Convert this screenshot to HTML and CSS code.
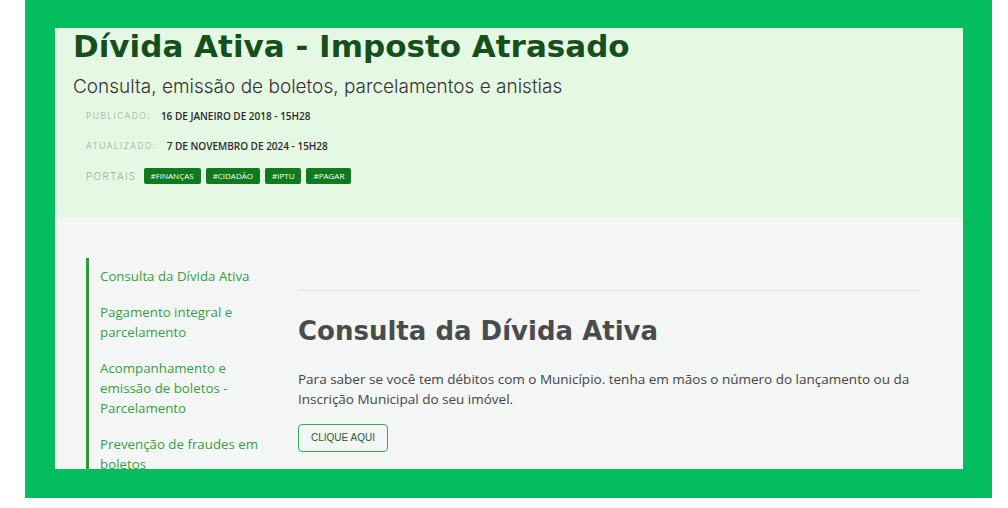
FILE: index.html
```html
<!DOCTYPE html>
<html lang="pt-BR">
<head>
    <meta charset="UTF-8">
    <meta name="viewport" content="width=device-width, initial-scale=1.0">
    <title>Dívida Ativa - Imposto Atrasado</title>
    <link rel="stylesheet" href="styles.css">
</head>
<body>
    <div class="frame">
        <div class="page">
            <header class="pageHeader">
                <h1 class="pageTitle">Dívida Ativa - Imposto Atrasado</h1>
                <p class="pageSubtitle">Consulta, emissão de boletos, parcelamentos e anistias</p>
                <div class="metaRow">
                    <span class="metaLabel">Publicado:</span>
                    <span class="metaValue">16 de janeiro de 2018 - 15h28</span>
                </div>
                <div class="metaRow">
                    <span class="metaLabel">Atualizado:</span>
                    <span class="metaValue">7 de novembro de 2024 - 15h28</span>
                </div>
                <div class="metaRow">
                    <span class="metaLabel">Portais</span>
                    <a class="tag" href="#">#finanças</a>
                    <a class="tag" href="#">#cidadão</a>
                    <a class="tag" href="#">#iptu</a>
                    <a class="tag" href="#">#pagar</a>
                </div>
            </header>

            <div class="pageBody">
                <nav class="sideMenu">
                    <a href="#">Consulta da Dívida Ativa</a>
                    <a href="#">Pagamento integral e parcelamento</a>
                    <a href="#">Acompanhamento e emissão de boletos - Parcelamento</a>
                    <a href="#">Prevenção de fraudes em boletos</a>
                </nav>

                <main class="mainContent">
                    <hr class="divider">
                    <h2 class="sectionTitle">Consulta da Dívida Ativa</h2>
                    <p class="sectionText">Para saber se você tem débitos com o Município. tenha em mãos o número do lançamento ou da Inscrição Municipal do seu imóvel.</p>
                    <a class="outlineButton" href="#">Clique aqui</a>
                </main>
            </div>
        </div>
    </div>
</body>
</html>
```

FILE: styles.css
```css
body {
    margin: 0;
    background-color: #ffffff;
    font-family: 'Open Sans', 'Noto Sans', sans-serif;
}

.frame {
    width: 908px;
    margin-left: 25px;
    padding: 28px 29px 29px 30px;
    background-color: #03bd5f;
}

.page {
    height: 441px;
    overflow: hidden;
    background-color: #f4f5f5;
}

/* header */

.pageHeader {
    height: 190px;
    box-sizing: border-box;
    padding: 0 0 0 18px;
    background-color: #e5f8e3;
}

.pageTitle {
    margin: 0;
    font-family: 'DejaVu Sans', sans-serif;
    font-size: 31px;
    font-weight: 700;
    line-height: 36px;
    color: #154f1c;
}

.pageSubtitle {
    margin: 12px 0 10px;
    font-family: 'Inter', sans-serif;
    font-size: 19px;
    font-weight: 300;
    line-height: 22px;
    color: #333333;
}

.metaRow {
    display: flex;
    align-items: center;
    height: 16px;
    margin: 0 0 14px 13px;
}

.metaRow:last-child {
    margin-top: 0;
}

.metaLabel {
    margin-right: 10px;
    font-family: 'Inter', sans-serif;
    font-size: 8.5px;
    font-weight: 300;
    letter-spacing: 1.4px;
    text-transform: uppercase;
    color: #a3a8a3;
}

.metaRow:last-child .metaLabel {
    margin-right: 7px;
    font-size: 10px;
    letter-spacing: 1.3px;
}

.metaValue {
    font-size: 10px;
    font-weight: 600;
    text-transform: uppercase;
    color: #2b2b2b;
}

.tag {
    display: inline-block;
    height: 16px;
    line-height: 16px;
    margin-right: 5px;
    padding: 0 7px;
    border-radius: 2px;
    background-color: #127a1e;
    font-size: 8px;
    text-transform: uppercase;
    text-decoration: none;
    color: #ffffff;
}

/* body */

.pageBody {
    display: flex;
    padding: 40px 0 0 31px;
}

.sideMenu {
    display: flex;
    flex-direction: column;
    gap: 16px;
    width: 166px;
    padding: 8px 0 0 11px;
    border-left: 3px solid #2a9c37;
}

.sideMenu a {
    font-size: 13.3px;
    line-height: 20px;
    color: #34a045;
    text-decoration: none;
}

.mainContent {
    flex: 1;
    margin: 0 42px 0 32px;
}

.divider {
    margin: 32px 0 0;
    border: none;
    border-top: 1px solid #e3e5e4;
}

.sectionTitle {
    margin: 24px 0 22px;
    font-family: 'DejaVu Sans', sans-serif;
    font-size: 26px;
    font-weight: 700;
    line-height: 32px;
    color: #4a4c4c;
}

.sectionText {
    margin: 0 0 15px;
    font-size: 13.5px;
    line-height: 20px;
    color: #444444;
}

.outlineButton {
    display: inline-block;
    padding: 0 12px;
    height: 26px;
    line-height: 26px;
    border: 1px solid #36b04a;
    border-radius: 4px;
    font-family: 'Liberation Sans', Arial, sans-serif;
    font-size: 10px;
    text-transform: uppercase;
    text-decoration: none;
    color: #2d5a2f;
}
```
